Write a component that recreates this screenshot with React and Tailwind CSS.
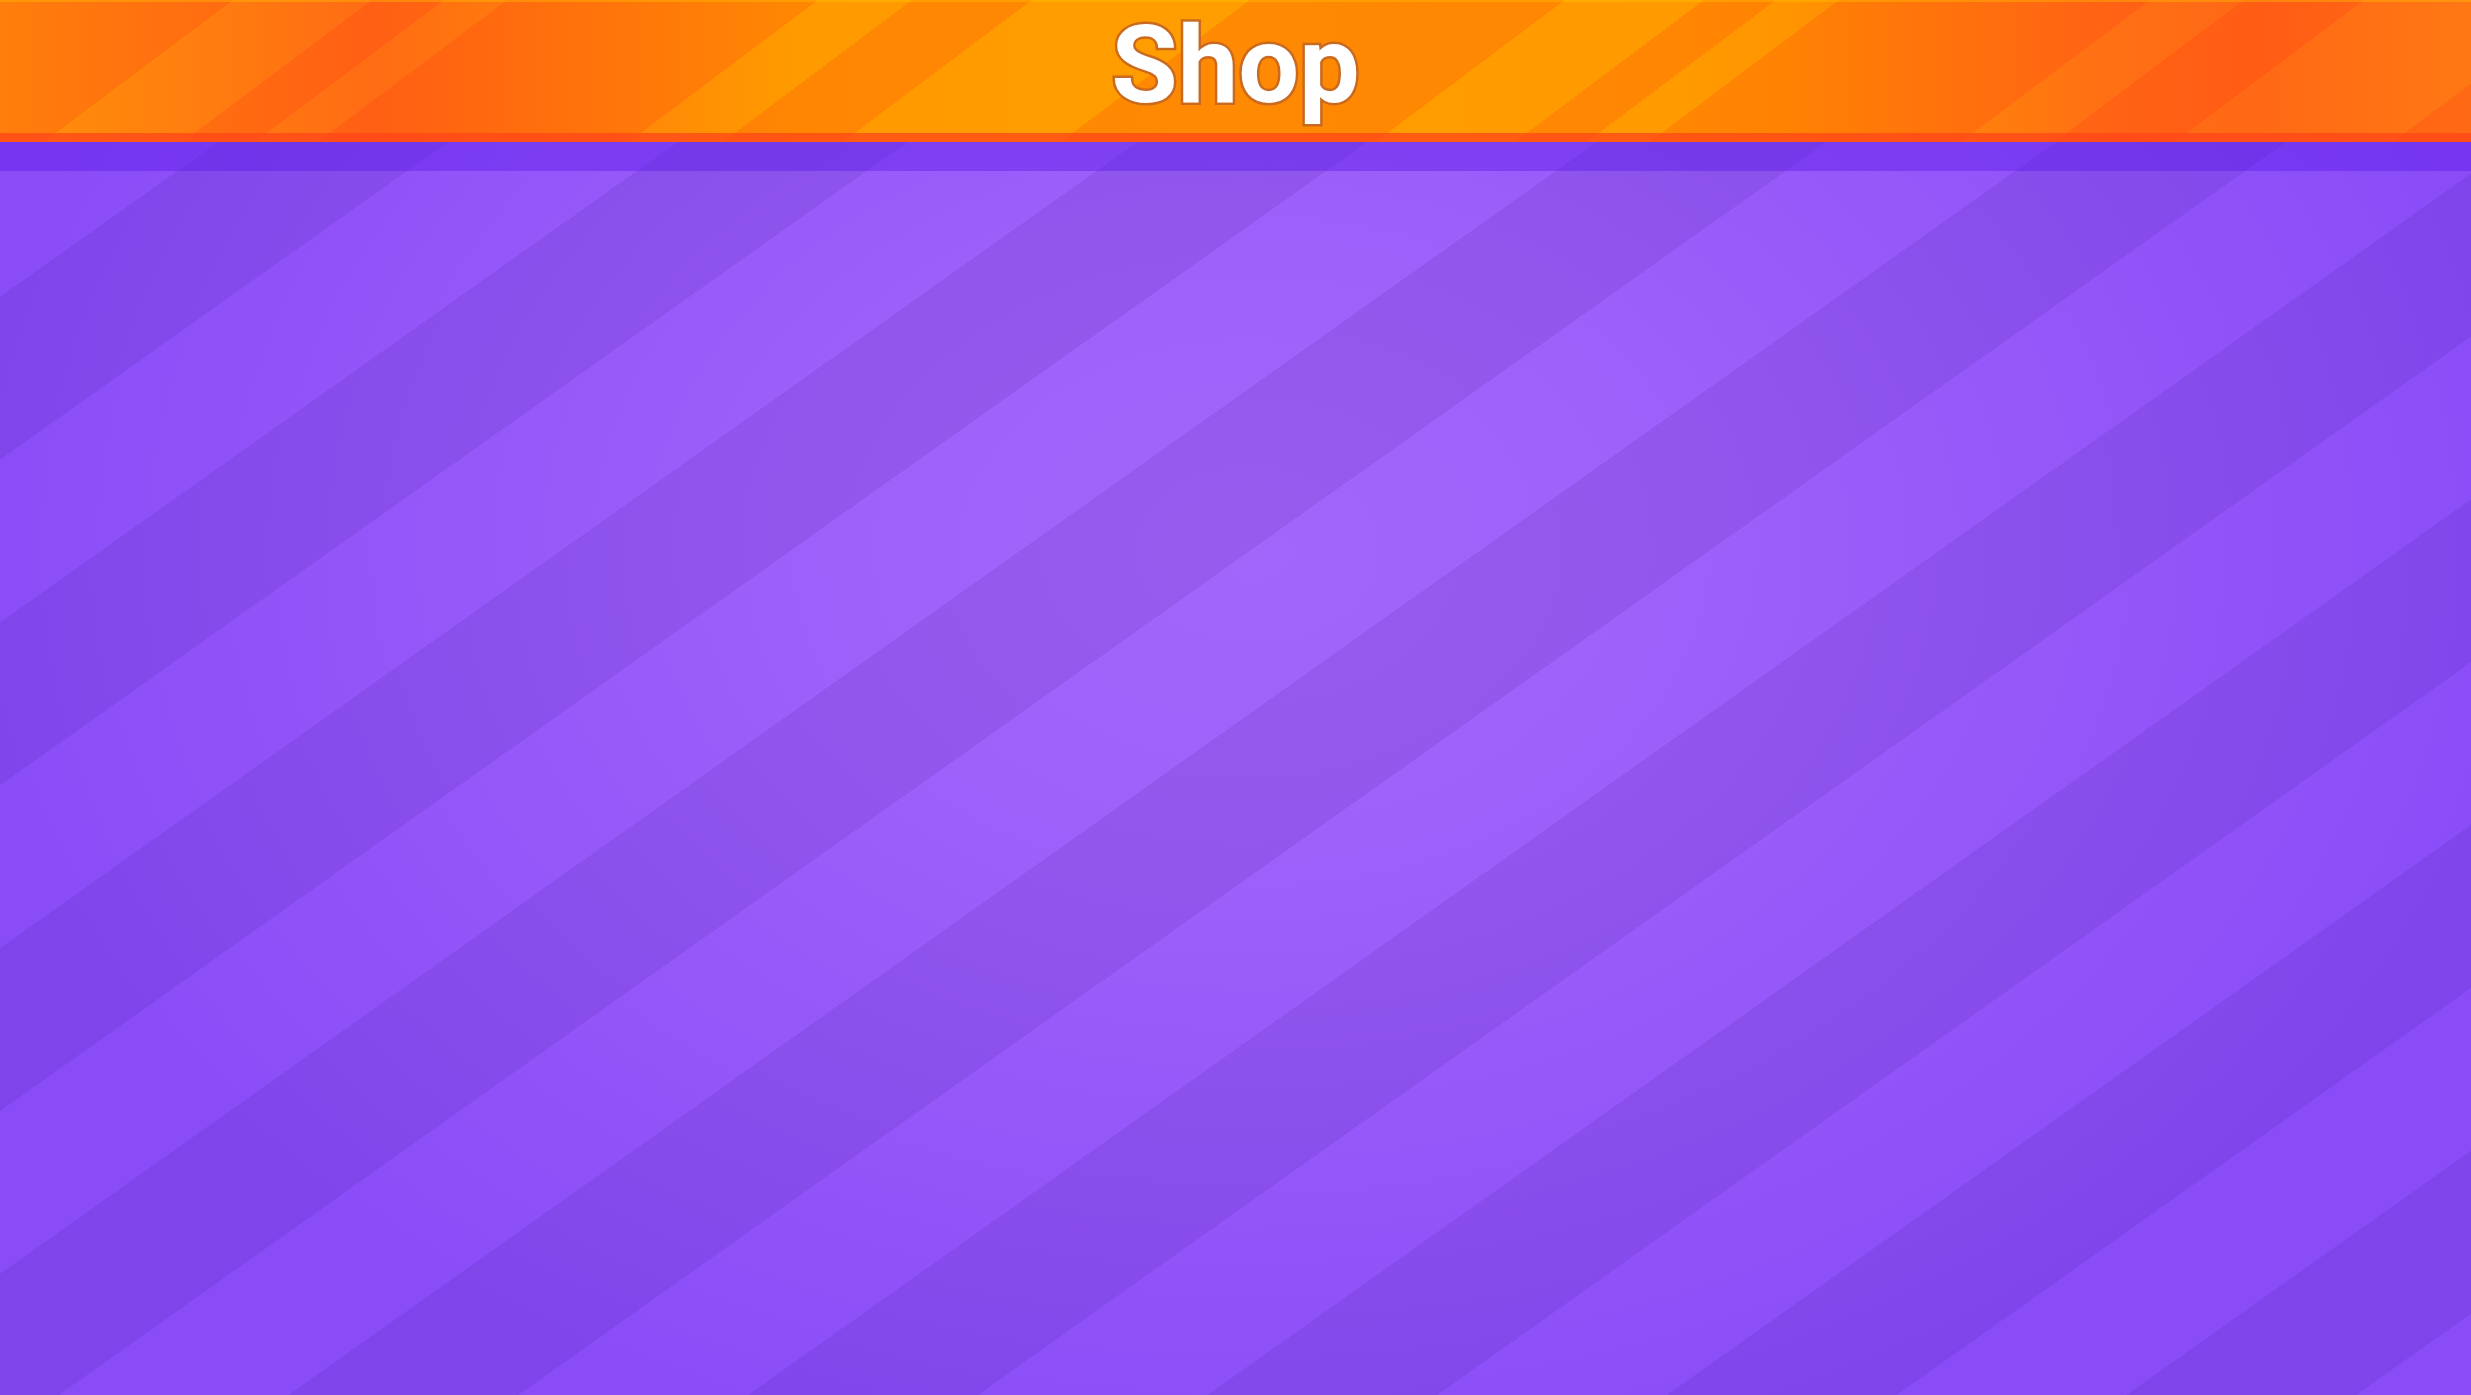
// App.jsx

import React from 'react';

const App = () => {
	return (
		<div className="flex h-screen min-h-[1395px] flex-col overflow-hidden font-['Roboto','Liberation_Sans',sans-serif]">
			{/* Header */}
			<header className="flex h-[142px] shrink-0 flex-col bg-[image:repeating-linear-gradient(143.13deg,rgba(255,30,20,0.16)_0_139.8px,transparent_139.8px_223.2px,rgba(255,30,20,0.16)_223.2px_266.4px,transparent_266.4px_304.2px,rgba(255,30,20,0.16)_304.2px_490.8px,transparent_490.8px_547.2px,rgba(255,30,20,0.16)_547.2px_619.2px,transparent_619.2px_750px,rgba(255,30,20,0.16)_750px_799.2px),linear-gradient(90deg,#ff900a_0%,#ff7b10_9%,#ff6c14_15%,#ff7310_18%,#ff9a00_32%,#ff9e00_50%,#ff9a00_68%,#ff9600_72%,#ff7014_85%,#ff6814_91%,#ff7814_100%)]">
				<div className="h-[2px] bg-[rgba(255,200,0,0.35)]"></div>
				<div className="flex-1">
					<h1 className="pt-[9px] text-center text-[108px] font-bold leading-none text-white [paint-order:stroke_fill] [-webkit-text-stroke:5px_#c96a1f]">
						Shop
					</h1>
				</div>
				<div className="h-[9px] bg-[rgba(255,70,25,0.75)]"></div>
			</header>

			{/* Main */}
			<main className="flex-1 bg-[image:repeating-linear-gradient(144.67deg,transparent_0_126.3px,rgba(50,15,130,0.11)_126.3px_259.2px,transparent_259.2px_265.7px),radial-gradient(ellipse_1300px_950px_at_1250px_408px,#a366fb_0%,#9d60fa_35%,#8a4cf7_100%)]">
				<div className="h-[29px] bg-[rgba(88,22,232,0.4)]"></div>
			</main>
		</div>
	);
};

export default App;
